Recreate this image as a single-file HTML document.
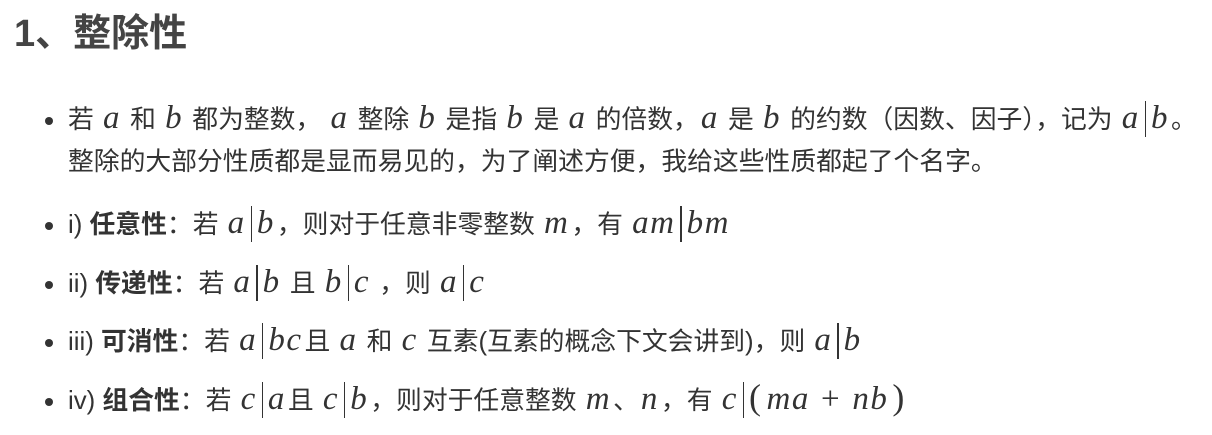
<!DOCTYPE html>
<html><head><meta charset="utf-8"><style>
body{margin:0;background:#fff;color:#333;font-family:"Liberation Sans","Noto Sans CJK SC",sans-serif;width:1212px;height:435px;overflow:hidden}
h1{position:absolute;left:14px;top:6px;margin:0;font-size:38px;font-weight:bold;color:#444;line-height:56px}
ul{position:absolute;left:0;top:0;margin:0;padding:0;list-style:none}
li{position:absolute;left:68px;font-size:25.8px;white-space:nowrap;line-height:42px}
li:before{content:"";position:absolute;left:-23px;top:18px;width:8px;height:8px;border-radius:50%;background:#333}
i{font-family:"Liberation Serif",serif;font-size:33px;letter-spacing:1.5px;margin:0 2px;line-height:30px}
.bar{display:inline-block;width:1.2px;height:36px;background:#333;vertical-align:-9px;margin:0 3px}
b{color:#333}
</style></head><body>
<h1>1、整除性</h1>
<ul>
<li style="top:99px">若 <i>a</i> 和 <i>b</i> 都为整数， <i>a</i> 整除 <i>b</i> 是指 <i>b</i> 是 <i>a</i> 的倍数，<i>a</i> 是 <i>b</i> 的约数（因数、因子），记为 <i>a</i><span class="bar"></span><i>b</i>。<br>整除的大部分性质都是显而易见的，为了阐述方便，我给这些性质都起了个名字。</li>
<li style="top:204px">i) <b>任意性</b>：若 <i>a</i><span class="bar"></span><i>b</i>，则对于任意非零整数 <i>m</i>，有 <i>am</i><span class="bar"></span><i>bm</i></li>
<li style="top:263px">ii) <b>传递性</b>：若 <i>a</i><span class="bar"></span><i>b</i> 且 <i>b</i><span class="bar"></span><i>c</i> ，则 <i>a</i><span class="bar"></span><i>c</i></li>
<li style="top:321px">iii) <b>可消性</b>：若 <i>a</i><span class="bar"></span><i>bc</i>且 <i>a</i> 和 <i>c</i> 互素(互素的概念下文会讲到)，则 <i>a</i><span class="bar"></span><i>b</i></li>
<li style="top:380px">iv) <b>组合性</b>：若 <i>c</i><span class="bar"></span><i>a</i>且 <i>c</i><span class="bar"></span><i>b</i>，则对于任意整数 <i>m</i>、<i>n</i>，有 <i>c</i><span class="bar"></span><i style="font-style:normal;font-size:36px">(</i><i>ma</i> <i style="font-style:normal">+</i> <i>nb</i><i style="font-style:normal;font-size:36px">)</i></li>
</ul>
</body></html>
